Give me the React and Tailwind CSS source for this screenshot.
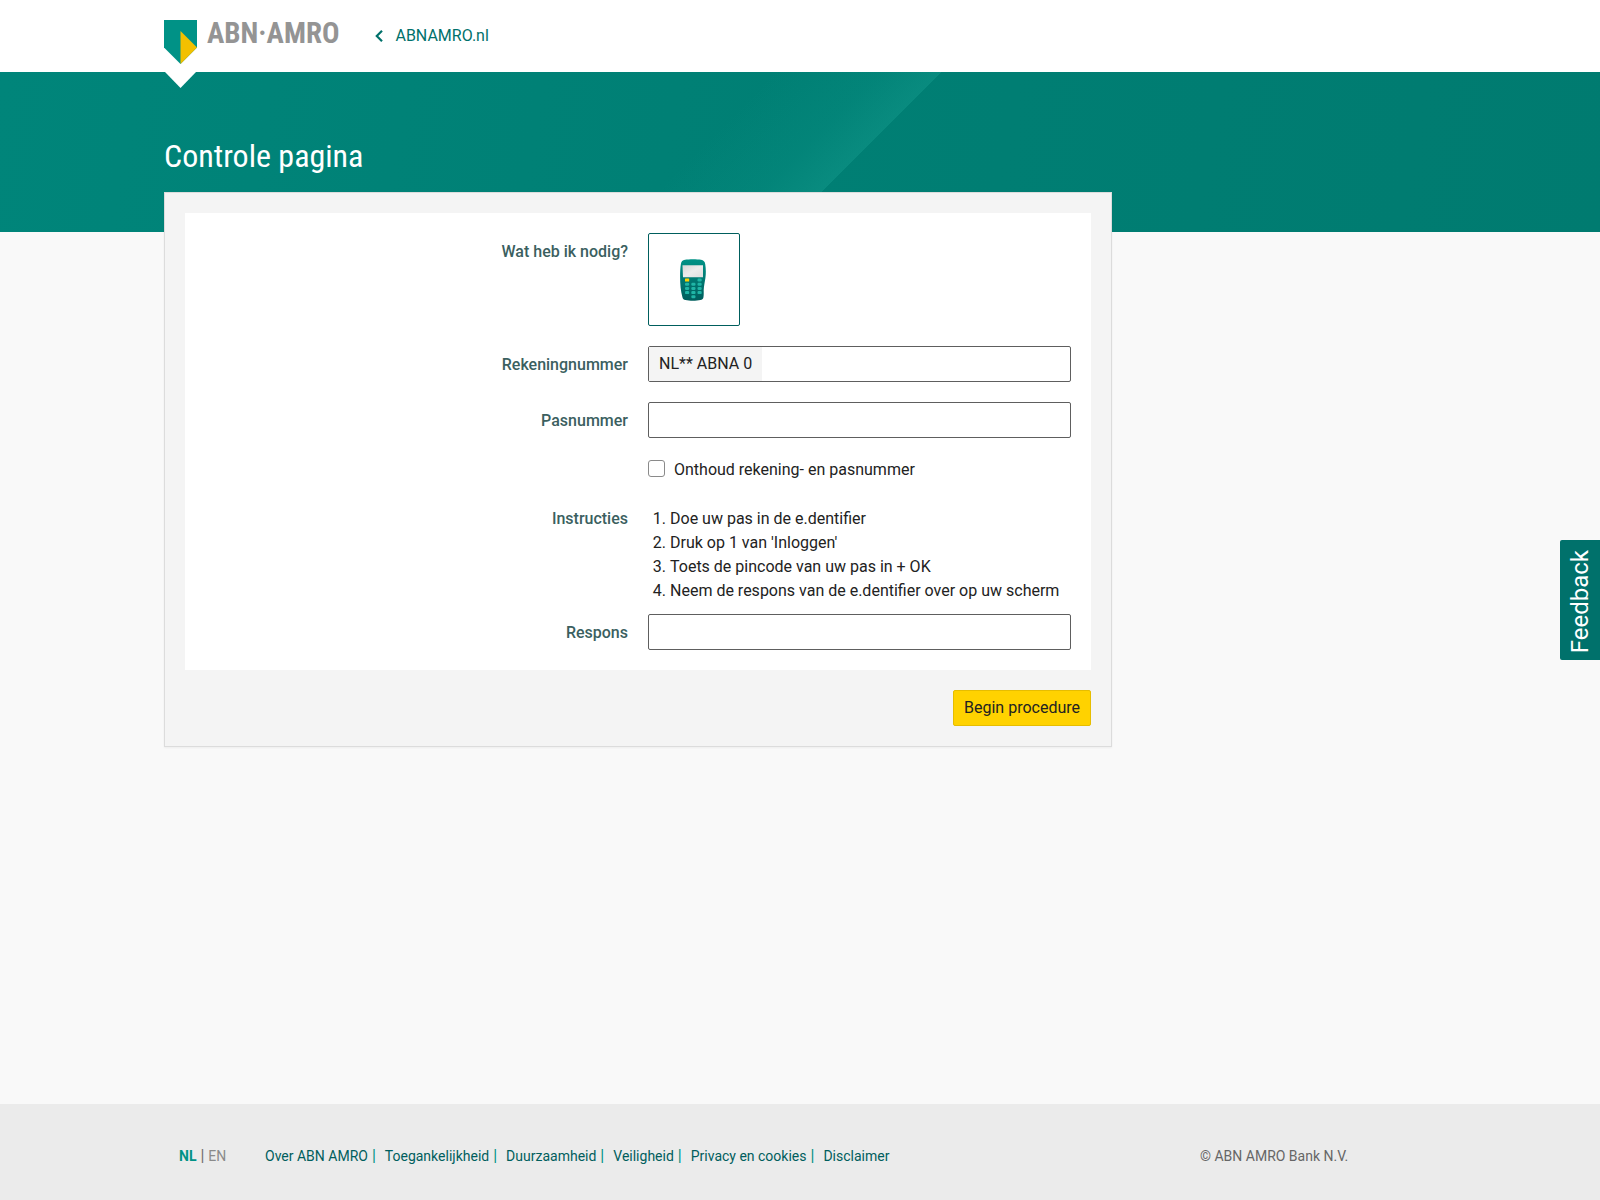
import React, { useState } from 'react';

const footerLinks = [
    'Over ABN AMRO',
    'Toegankelijkheid',
    'Duurzaamheid',
    'Veiligheid',
    'Privacy en cookies',
    'Disclaimer',
];

const instructions = [
    'Doe uw pas in de e.dentifier',
    "Druk op 1 van 'Inloggen'",
    'Toets de pincode van uw pas in + OK',
    'Neem de respons van de e.dentifier over op uw scherm',
];

// x, y of every key on the keypad
const keys = [
    [17.5, 19.5],
    [5, 23.7], [11.3, 23.7], [17.5, 23.7],
    [5, 27.9], [11.3, 27.9], [17.5, 27.9],
    [5, 32.1], [11.3, 32.1], [17.5, 32.1],
    [11.3, 36.3],
];

const Shield = () => (
    <svg viewBox="0 0 33 44" className="w-[33px] h-11" aria-hidden="true">
        <path d="M0 0h33v27.5L16.5 44 0 27.5z" fill="#009286" />
        <path d="M16.5 11 33 27.5 16.5 44z" fill="#f3c000" />
    </svg>
);

const Edentifier = () => (
    <svg viewBox="0 0 26 42" className="w-[26px] h-[42px]" aria-hidden="true">
        <defs>
            <linearGradient id="body" x1="0" y1="0" x2="0" y2="1">
                <stop offset="0" stopColor="#009286" />
                <stop offset="1" stopColor="#005e5d" />
            </linearGradient>
            <linearGradient id="screen" x1="0" y1="0" x2="1" y2="1">
                <stop offset="0" stopColor="#d6d6d6" />
                <stop offset="0.5" stopColor="#ececec" />
                <stop offset="1" stopColor="#dedede" />
            </linearGradient>
        </defs>
        <path
            d="M5 .8C9 0 17 0 21 .8c2.600.5 3.800 1.800 4.200 4.200.8 5 .8 10 .2 14-.6 4-1.500 8-1.700 12 0 3 .2 5-.3 7.500-.3 1.500-1.400 2.300-3 2.600-4 .9-11 .9-15 0-1.600-.4-2.500-1.200-2.900-2.700C.7 32 .1 25 .1 18 .1 13 .2 9 .9 5 1.300 2.500 2.500 1.300 5 .8z"
            fill="url(#body)"
        />
        <path d="M2.500 6.300h20.500v12h-20z" fill="url(#screen)" />
        <rect x="5" y="19.500" width="4.200" height="3" rx="0.6" fill="#ffd200" />
        {keys.map(([x, y]) => (
            <rect key={`${x}-${y}`} x={x} y={y} width="4.200" height="3" rx="1.200" fill="#1fb5a6" />
        ))}
    </svg>
);

const Row = ({ label, htmlFor, className = '', children }) => (
    <div className={`grid grid-cols-2 gap-x-5 ${className}`}>
        {htmlFor ? (
            <label htmlFor={htmlFor} className="pt-[7px] text-right font-medium text-[#3b5f5f]">{label}</label>
        ) : (
            <span className="pt-[7px] text-right font-medium text-[#3b5f5f]">{label}</span>
        )}
        {children}
    </div>
);

const App = () => {
    const [account, setAccount] = useState('');
    const [card, setCard] = useState('');
    const [remember, setRemember] = useState(false);
    const [response, setResponse] = useState('');

    return (
        <div className="min-h-screen flex flex-col bg-[#f9f9f9] text-base text-[#222] font-[Roboto,sans-serif]">
            <header className="h-18 bg-white">
                <div className="max-w-[1272px] mx-auto flex items-start">
                    <a href="#" aria-label="ABN AMRO" className="relative z-10 flex gap-2.5 pt-5">
                        <Shield />
                        <span className="text-[29px] leading-[26px] font-bold text-[#949494] font-['Roboto_Condensed','Liberation_Sans_Narrow',sans-serif]">
                            ABN·AMRO
                        </span>
                        {/* Notch under the shield */}
                        <svg viewBox="0 0 32 16" className="absolute top-18 left-0 w-8 h-4" aria-hidden="true">
                            <path d="M1 0h31L16.500 16z" fill="#fff" />
                        </svg>
                    </a>
                    <a href="#" className="ml-9 pt-6 flex items-center gap-3 text-[#00716b]">
                        <svg viewBox="0 0 8 12" className="w-2 h-3" fill="none" stroke="#00716b" strokeWidth="2.200" aria-hidden="true">
                            <path d="M7 .8 1.800 6 7 11.200" />
                        </svg>
                        ABNAMRO.nl
                    </a>
                </div>
            </header>

            <div className="h-40 pt-15 bg-[linear-gradient(135deg,transparent_44%,#109c8e30_50%,#18a09260_53.500%,transparent_53.500%),linear-gradient(100deg,#00857a,#007f74_50%,#007b70)]">
                <h1 className="max-w-[1272px] mx-auto text-[32px] leading-12 text-white font-['Roboto_Condensed',Roboto,sans-serif]">
                    Controle pagina
                </h1>
            </div>

            <main className="relative -mt-10 grow">
                <div className="max-w-[1272px] w-full mx-auto grid grid-cols-4 gap-6">
                    <form
                        onSubmit={(e) => e.preventDefault()}
                        className="col-span-3 p-5 bg-[#f4f4f4] border border-[#dcdcdc] shadow-xs"
                    >
                        <div className="p-5 bg-white">
                            <Row label="Wat heb ik nodig?">
                                <div className="w-[92px] h-[93px] pr-0.5 flex items-center justify-center border border-[#005e5d] rounded-xs">
                                    <Edentifier />
                                </div>
                            </Row>
                            <Row label="Rekeningnummer" htmlFor="account" className="mt-5">
                                <div className="h-9 flex border border-[#5e5e5e] rounded-xs">
                                    <span className="px-2.5 leading-[34px] bg-[#f4f4f4]">NL** ABNA 0</span>
                                    <input
                                        id="account"
                                        type="text"
                                        value={account}
                                        onChange={(e) => setAccount(e.target.value)}
                                        className="grow min-w-0 px-2.5 outline-none"
                                    />
                                </div>
                            </Row>
                            <Row label="Pasnummer" htmlFor="card" className="mt-5">
                                <input
                                    id="card"
                                    type="text"
                                    value={card}
                                    onChange={(e) => setCard(e.target.value)}
                                    className="h-9 px-2.5 border border-[#5e5e5e] rounded-xs"
                                />
                            </Row>
                            <div className="mt-5 grid grid-cols-2 gap-x-5">
                                <label className="col-start-2 flex items-start gap-[9px]">
                                    <input
                                        type="checkbox"
                                        checked={remember}
                                        onChange={(e) => setRemember(e.target.checked)}
                                        className="appearance-none mt-0.5 w-[17px] h-[17px] border border-[#8a8a8a] rounded-[3px] bg-white checked:bg-[#00716b]"
                                    />
                                    Onthoud rekening- en pasnummer
                                </label>
                            </div>
                            <div className="mt-[25px] grid grid-cols-2 gap-x-5">
                                <span className="text-right font-medium text-[#3b5f5f]">Instructies</span>
                                <ol className="pl-[22px] list-decimal">
                                    {instructions.map((text) => (
                                        <li key={text}>{text}</li>
                                    ))}
                                </ol>
                            </div>
                            <Row label="Respons" htmlFor="response" className="mt-[11px]">
                                <input
                                    id="response"
                                    type="text"
                                    value={response}
                                    onChange={(e) => setResponse(e.target.value)}
                                    className="h-9 px-2.5 border border-[#5e5e5e] rounded-xs"
                                />
                            </Row>
                        </div>
                        <div className="mt-5 flex justify-end">
                            <button type="submit" className="h-9 px-2.5 bg-[#ffd200] border border-[#e6bd00] rounded-xs">
                                Begin procedure
                            </button>
                        </div>
                    </form>
                </div>
            </main>

            <footer className="h-24 pt-10 bg-[#ebebeb] text-sm leading-6">
                <div className="max-w-[1272px] mx-auto px-[15px] grid grid-cols-[86px_1fr_221px]">
                    <div className="flex gap-1 text-[#8a8a8a]">
                        <a href="#" className="font-bold text-[#009286]">NL</a>
                        <span className="text-base text-[#707070]">|</span>
                        <a href="#">EN</a>
                    </div>
                    <nav className="flex gap-[9px] text-[#005e5d]">
                        {footerLinks.map((link, i) => (
                            <span key={link} className="flex gap-1">
                                <a href="#">{link}</a>
                                {i < footerLinks.length - 1 && <span className="text-base text-[#009286]">|</span>}
                            </span>
                        ))}
                    </nav>
                    <span className="text-[#666]">© ABN AMRO Bank N.V.</span>
                </div>
            </footer>

            <button
                type="button"
                className="fixed right-0 top-[45%] w-10 h-30 pt-[3px] flex items-center justify-center bg-[#00716b] text-white text-2xl rounded-l-xs"
            >
                <span className="[writing-mode:vertical-rl] rotate-180">Feedback</span>
            </button>
        </div>
    );
};

export default App;
